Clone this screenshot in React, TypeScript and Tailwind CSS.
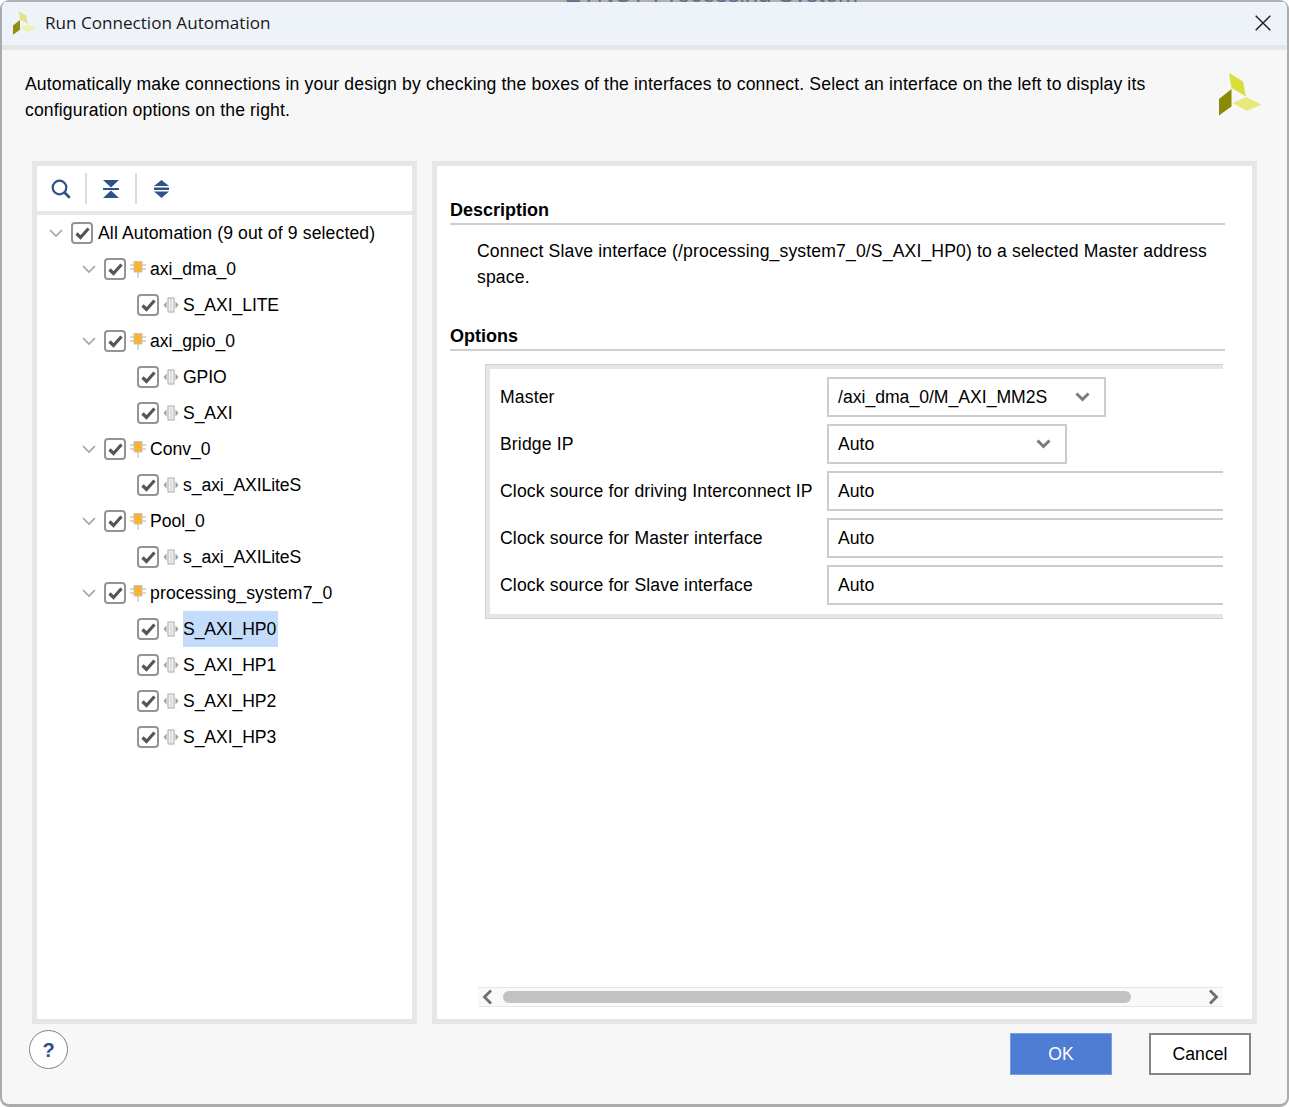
import React from 'react'

const sans = "font-['Liberation_Sans',Arial,sans-serif]"

type Row = { level: 0 | 1 | 2; label: string; selected?: boolean; wide?: boolean }

const rows: Row[] = [
  { level: 0, label: 'All Automation (9 out of 9 selected)', wide: true },
  { level: 1, label: 'axi_dma_0' },
  { level: 2, label: 'S_AXI_LITE' },
  { level: 1, label: 'axi_gpio_0' },
  { level: 2, label: 'GPIO' },
  { level: 2, label: 'S_AXI' },
  { level: 1, label: 'Conv_0' },
  { level: 2, label: 's_axi_AXILiteS' },
  { level: 1, label: 'Pool_0' },
  { level: 2, label: 's_axi_AXILiteS' },
  { level: 1, label: 'processing_system7_0', wide: true },
  { level: 2, label: 'S_AXI_HP0', selected: true },
  { level: 2, label: 'S_AXI_HP1' },
  { level: 2, label: 'S_AXI_HP2' },
  { level: 2, label: 'S_AXI_HP3' },
]

const options = [
  { label: 'Master', value: '/axi_dma_0/M_AXI_MM2S', width: 'w-[279px]', select: true },
  { label: 'Bridge IP', value: 'Auto', width: 'w-[240px]', select: true },
  { label: 'Clock source for driving Interconnect IP', value: 'Auto', width: 'w-[420px]', select: false },
  { label: 'Clock source for Master interface', value: 'Auto', width: 'w-[420px]', select: false },
  { label: 'Clock source for Slave interface', value: 'Auto', width: 'w-[420px]', select: false },
]

const Logo = ({ size, pale }: { size: number; pale?: boolean }) => (
  <svg width={size} height={size} viewBox="0 0 43 43" className="shrink-0">
    <polygon points="10,0 24,8.5 27,23.5 12.5,15" fill={pale ? '#e2e48c' : '#d9df3a'} />
    <polygon points="12.5,16 12.5,33.5 0,42.5 0,26" fill={pale ? '#8f8f14' : '#8a8a05'} />
    <polygon points="27,24 42.5,31.5 28,38 13.5,30" fill={pale ? '#eef0b4' : '#e6ea7c'} />
  </svg>
)

const Chevron = () => (
  <svg width="14" height="9" viewBox="0 0 14 9" className="shrink-0">
    <path d="M1 1l6 6 6-6" fill="none" stroke="#a3a3a3" strokeWidth="1.6" />
  </svg>
)

const Checkbox = () => (
  <div className="flex h-[22px] w-[22px] shrink-0 items-center justify-center rounded-[4px] border-2 border-[#949494] bg-white">
    <svg width="15" height="13" viewBox="0 0 15 13">
      <path d="M1.5 6.5l4 4 8-9" fill="none" stroke="#555" strokeWidth="3.2" />
    </svg>
  </div>
)

const BlockIcon = () => (
  <svg width="16" height="18" viewBox="0 0 16 18" className="shrink-0">
    <path d="M0 5h16M0 9h16M8 12v6" stroke="#b0b0b0" strokeWidth="1" />
    <rect x="4" y="1.5" width="8" height="10.5" fill="#f9b233" stroke="#cfc4a8" strokeWidth="1" />
  </svg>
)

const PortIcon = () => (
  <svg width="16" height="16" viewBox="0 0 16 16" className="shrink-0">
    <path d="M3.5 4.5L0.5 8l3 3.5zM12.5 4.5l3 3.5-3 3.5z" fill="#9c9c9c" />
    <rect x="5" y="1" width="6" height="14" fill="#f4f4f4" stroke="#a6a6a6" strokeWidth="1" />
    <path d="M8 2v12" stroke="#c4c4c4" strokeWidth="1" />
  </svg>
)

const TreeRow = ({ level, label, selected, wide }: Row) => (
  <div className={`flex h-9 items-center ${level === 0 ? 'pl-[12px]' : level === 1 ? 'pl-[45px]' : 'pl-[100px]'}`}>
    {level < 2 && <Chevron />}
    <div className={level < 2 ? 'ml-[8px]' : ''}>
      <Checkbox />
    </div>
    <div className={`${level === 0 ? 'w-[5px]' : 'ml-[4px] mr-[4px]'}`}>
      {level === 1 && <BlockIcon />}
      {level === 2 && <PortIcon />}
    </div>
    <span
      className={`flex h-9 items-center whitespace-nowrap pr-[2px] text-[17.6px] text-black ${wide ? 'tracking-[0.12px]' : ''} ${level === 2 ? 'tracking-[-0.08px]' : ''} ${selected ? 'bg-[#c4dcfb]' : ''}`}
    >
      {label}
    </span>
  </div>
)

const Heading = ({ children }: { children: string }) => (
  <div className="mr-[27px] ml-[13px] border-b-2 border-[#cfcfcf] pb-[2px] text-[18px] leading-[22px] font-bold text-black">
    {children}
  </div>
)

export default function App() {
  return (
    <div className={`h-[1107px] w-[1289px] overflow-hidden bg-white ${sans}`}>
      <div className="flex h-full flex-col overflow-hidden rounded-[9px] border-x-2 border-b-[3px] border-[#ababab] bg-[#f7f7f7]">
        {/* window behind shows through the top edge */}
        <div className="h-[2px] shrink-0 overflow-hidden bg-[#b0b0b0] pl-[564px] text-[24px] leading-[2px] text-[#5f6f8f]">
          <div className="-mt-[7px] whitespace-nowrap">ZYNQ7 Processing System</div>
        </div>

        <div className="flex h-[43px] shrink-0 items-center bg-[#eef3f9] pr-[16px] pb-[2px] pl-[11px]">
          <Logo size={24} pale />
          <span className="ml-[8px] font-['Open_Sans',sans-serif] text-[17.1px] text-[#1a1a1a]">Run Connection Automation</span>
          <svg width="16" height="16" viewBox="0 0 16 16" className="ml-auto">
            <path d="M.7.7l14.6 14.6M15.3.7L.7 15.3" stroke="#1a1a1a" strokeWidth="1.4" />
          </svg>
        </div>
        <div className="h-[5px] shrink-0 bg-[#e6e6e6]" />

        <div className="flex h-[111px] shrink-0 items-start justify-between pt-[21px] pr-[25px] pl-[23px]">
          <p className="w-[1140px] text-[17.6px] leading-[26px] tracking-[0.14px] text-black">
            Automatically make connections in your design by checking the boxes of the interfaces to connect. Select an interface on the left to display its configuration options on the right.
          </p>
          <div className="mt-[2px]">
            <Logo size={43} />
          </div>
        </div>

        <div className="ml-[30px] flex h-[863px] w-[1225px] shrink-0 gap-[15px]">
          <div className="flex w-[385px] flex-col border-[5px] border-[#e6e6e6] bg-white">
            <div className="flex h-[45px] shrink-0 items-center border-b-0 pl-[14px]">
              <svg width="20" height="20" viewBox="0 0 20 20">
                <circle cx="8.5" cy="8.5" r="6.8" fill="none" stroke="#2f5288" strokeWidth="2.2" />
                <path d="M14 14l4 4" stroke="#2f5288" strokeWidth="2.8" strokeLinecap="round" />
              </svg>
              <div className="mr-[16px] ml-[14px] h-[31px] w-[2px] bg-[#dcdcdc]" />
              <svg width="16" height="18" viewBox="0 0 16 18">
                <path d="M0 0h16L8 7.5zM0 8h16v2H0zM8 10.5L16 18H0z" fill="#2f5288" />
              </svg>
              <div className="mr-[17px] ml-[16px] h-[31px] w-[2px] bg-[#dcdcdc]" />
              <svg width="15" height="18" viewBox="0 0 15 18">
                <path d="M7.5 0L15 6H0zM0 7.5h15v2.5H0zM0 11.5h15L7.5 18z" fill="#2f5288" />
              </svg>
            </div>
            <div className="h-[4px] shrink-0 bg-[#e6e6e6]" />
            <div className="flex-1">
              {rows.map((row, i) => (
                <TreeRow key={i} {...row} />
              ))}
            </div>
          </div>

          <div className="flex w-[825px] flex-col border-[5px] border-[#e6e6e6] bg-white">
            <div className="pt-[33px]">
              <Heading>Description</Heading>
            </div>
            <p className="mt-[13px] mr-[27px] ml-[40px] text-[17.6px] leading-[26px] tracking-[0.14px] text-black">
              Connect Slave interface (/processing_system7_0/S_AXI_HP0) to a selected Master address space.
            </p>
            <div className="mt-[35px]">
              <Heading>Options</Heading>
            </div>

            <div className="mt-[13px] ml-[48px] w-[738px] overflow-hidden border-y border-l border-[#cfcfcf]">
              <div className="flex flex-col gap-[7px] border-y-4 border-l-4 border-[#e6e6e6] pt-[8px] pb-[9px] pl-[10px]">
                {options.map((opt) => (
                  <div key={opt.label} className="flex h-[40px] items-center">
                    <span className="w-[327px] shrink-0 text-[17.6px] tracking-[0.14px] whitespace-nowrap text-black">{opt.label}</span>
                    <div className={`flex h-[40px] shrink-0 items-center justify-between border-2 border-[#cccccc] bg-white pr-[14px] pl-[9px] text-[17.6px] text-black ${opt.width}`}>
                      <span>{opt.value}</span>
                      {opt.select && (
                        <svg width="15" height="10" viewBox="0 0 15 10">
                          <path d="M1.5 1.5l6 6 6-6" fill="none" stroke="#7a7a7a" strokeWidth="3" />
                        </svg>
                      )}
                    </div>
                  </div>
                ))}
              </div>
            </div>

            <div className="mt-auto mr-[29px] mb-[12px] ml-[41px] flex h-[20px] items-center border-y border-[#e6e6e6] bg-[#f9f9f9] pr-[4px] pl-[4px]">
              <svg width="11" height="16" viewBox="0 0 11 16" className="shrink-0">
                <path d="M9 1.5L2.5 8 9 14.5" fill="none" stroke="#6e6e6e" strokeWidth="2.8" />
              </svg>
              <div className="ml-[10px] h-[12px] w-[628px] rounded-full bg-[#c2c2c2]" />
              <svg width="11" height="16" viewBox="0 0 11 16" className="ml-auto shrink-0">
                <path d="M2 1.5L8.5 8 2 14.5" fill="none" stroke="#6e6e6e" strokeWidth="2.8" />
              </svg>
            </div>
          </div>
        </div>

        <div className="flex flex-1 items-start pr-[36px] pl-[27px]">
          <div className="mt-[6px] flex h-[39px] w-[39px] items-center justify-center rounded-full border border-[#808080] bg-white text-[20px] font-bold text-[#2f5288]">
            ?
          </div>
          <div className="mt-[9px] ml-auto flex gap-[37px]">
            <button className="h-[42px] w-[102px] border border-[#76a0e6] bg-[#4f7dd3] text-[17.6px] text-white">OK</button>
            <button className="h-[42px] w-[102px] border-2 border-[#858585] bg-white text-[17.6px] text-black">Cancel</button>
          </div>
        </div>
      </div>
    </div>
  )
}
